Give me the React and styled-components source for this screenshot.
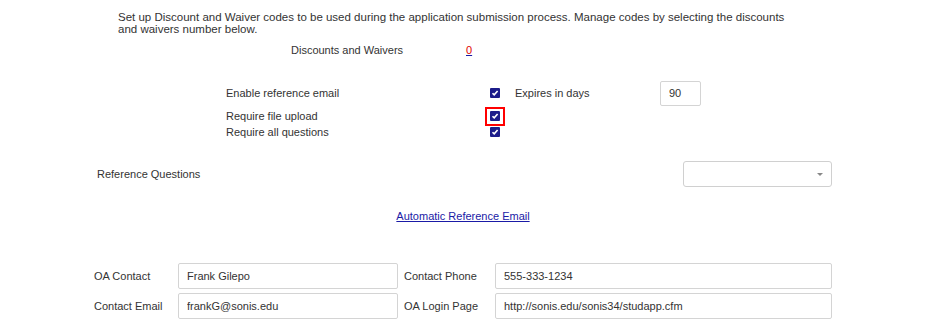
import React from 'react';
import styled, { createGlobalStyle } from 'styled-components';

const GlobalStyle = createGlobalStyle`
  html, body {
    margin: 0;
    padding: 0;
    background: #fff;
  }
  body {
    font-family: "Liberation Sans", Arial, sans-serif;
    font-size: 11px;
    color: #333;
  }
`;

function Check({ highlight }) {
  return (
    <CheckWrap highlight={highlight}>
      <CheckBox>
        <svg width="8" height="8" viewBox="0 0 8 8">
          <path d="M1.5 4.2 L3.2 5.9 L6.6 2" stroke="#fff" strokeWidth="1.6" fill="none" />
        </svg>
      </CheckBox>
    </CheckWrap>
  );
}

function App() {
  return (
    <Page>
      <GlobalStyle />
      <Intro>
        Set up Discount and Waiver codes to be used during the application submission process. Manage codes by selecting the discounts and waivers number below.
      </Intro>
      <CountRow>
        <CountLabel>Discounts and Waivers</CountLabel>
        <CountLink href="#">0</CountLink>
      </CountRow>

      <Options>
        <OptLabel>Enable reference email</OptLabel>
        <Check />
        <ExpiresLabel>Expires in days</ExpiresLabel>
        <SmallInput defaultValue="90" />

        <OptLabel>Require file upload</OptLabel>
        <Check highlight />
        <span />
        <span />

        <OptLabel>Require all questions</OptLabel>
        <Check />
        <span />
        <span />
      </Options>

      <QuestionsRow>
        <QLabel>Reference Questions</QLabel>
        <Select>
          <Arrow />
        </Select>
      </QuestionsRow>

      <LinkRow>
        <EmailLink href="#">Automatic Reference Email</EmailLink>
      </LinkRow>

      <ContactGrid>
        <FieldLabel>OA Contact</FieldLabel>
        <TextInput defaultValue="Frank Gilepo" />
        <FieldLabel>Contact Phone</FieldLabel>
        <TextInput defaultValue="555-333-1234" />

        <FieldLabel>Contact Email</FieldLabel>
        <TextInput defaultValue="frankG@sonis.edu" />
        <FieldLabel>OA Login Page</FieldLabel>
        <TextInput defaultValue="http://sonis.edu/sonis34/studapp.cfm" />
      </ContactGrid>
    </Page>
  );
}

const Page = styled.div`
  width: 746px;
  padding: 11px 0 0 90px;
`;

const Intro = styled.p`
  margin: 0 0 0 28px;
  width: 672px;
  font-size: 11.5px;
  line-height: 12px;
  color: #333;
`;

const CountRow = styled.div`
  display: flex;
  align-items: center;
  margin: 9px 0 0 201px;
  height: 12px;
`;

const CountLabel = styled.span`
  width: 175px;
`;

const CountLink = styled.a`
  color: #e00000;
  text-decoration: underline;
  text-decoration-color: #1a1aa6;
`;

const Options = styled.div`
  display: grid;
  grid-template-columns: 259px 20px 155px 41px;
  grid-template-rows: 26px 20px 12px;
  align-items: center;
  margin: 24px 0 0 136px;
`;

const OptLabel = styled.span`
  color: #333;
`;

const CheckWrap = styled.span`
  width: 20px;
  height: 19px;
  box-sizing: border-box;
  display: flex;
  align-items: center;
  justify-content: center;
  border: 2px solid ${p => (p.highlight ? '#f00' : 'transparent')};
`;

const CheckBox = styled.span`
  width: 10px;
  height: 10px;
  background: #1c1c8a;
  border-radius: 1px;
  display: flex;
  align-items: center;
  justify-content: center;
`;

const ExpiresLabel = styled.span`
  padding-left: 10px;
`;

const SmallInput = styled.input`
  box-sizing: border-box;
  width: 41px;
  height: 25px;
  border: 1px solid #d4d4d4;
  border-radius: 2px;
  padding: 0 8px;
  font: 11px "Liberation Sans", Arial, sans-serif;
  color: #333;
`;

const QuestionsRow = styled.div`
  display: flex;
  align-items: center;
  justify-content: space-between;
  margin-top: 23px;
  padding-left: 7px;
`;

const QLabel = styled.span``;

const Select = styled.div`
  position: relative;
  box-sizing: border-box;
  width: 149px;
  height: 26px;
  margin-right: 4px;
  border: 1px solid #d0d0d0;
  border-radius: 3px;
`;

const Arrow = styled.span`
  position: absolute;
  right: 8px;
  top: 11px;
  border-left: 3px solid transparent;
  border-right: 3px solid transparent;
  border-top: 3px solid #888;
`;

const LinkRow = styled.div`
  text-align: center;
  margin-top: 23px;
`;

const EmailLink = styled.a`
  color: #1a1aa6;
  text-decoration: underline;
`;

const ContactGrid = styled.div`
  display: grid;
  grid-template-columns: 84px 220px 97px 337px;
  grid-auto-rows: 26px;
  row-gap: 4px;
  column-gap: 0;
  align-items: center;
  margin: 41px 0 0 4px;
`;

const FieldLabel = styled.span`
  &:nth-child(4n + 3) {
    padding-left: 6px;
  }
`;

const TextInput = styled.input`
  box-sizing: border-box;
  width: 100%;
  height: 26px;
  border: 1px solid #d4d4d4;
  border-radius: 2px;
  padding: 0 8px;
  font: 11px "Liberation Sans", Arial, sans-serif;
  color: #333;
`;

export default App;
